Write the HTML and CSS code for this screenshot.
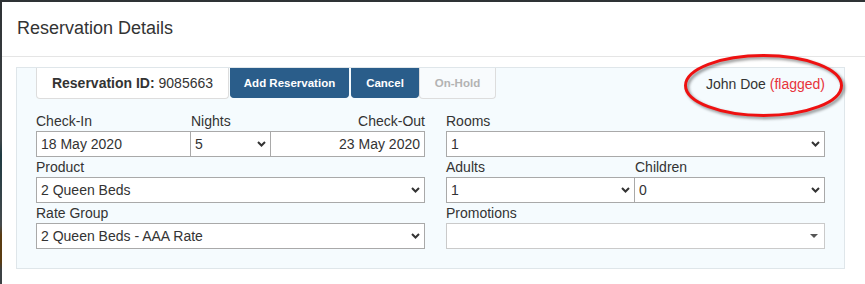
FILE: index.html
```html
<!DOCTYPE html>
<html>
<head>
<meta charset="utf-8">
<title>Reservation Details</title>
<link rel="stylesheet" href="styles.css">
</head>
<body>
<div class="modal">
  <div class="modal-header">
    <h4 class="title">Reservation Details</h4>
  </div>
  <div class="modal-body">
    <div class="panel">
      <div class="topbar">
        <div class="tabs">
          <div class="tab tab-id"><b>Reservation ID:</b>&nbsp;9085663</div>
          <button class="tab btn btn-primary add">Add Reservation</button>
          <button class="tab btn btn-primary cancel">Cancel</button>
          <button class="tab btn hold">On-Hold</button>
        </div>
        <div class="guest">John Doe <span class="flag">(flagged)</span></div>
      </div>
      <div class="form">
        <div class="col">
          <div class="row">
            <div class="field w-in">
              <label>Check-In</label>
              <div class="ctl">18 May 2020</div>
            </div>
            <div class="field w-nights joined">
              <label>Nights</label>
              <div class="ctl"><span>5</span><svg class="chev" width="9" height="6" viewBox="0 0 9 6"><polyline points="1,1 4.5,4.5 8,1"/></svg></div>
            </div>
            <div class="field w-out joined">
              <label class="right">Check-Out</label>
              <div class="ctl end">23 May 2020</div>
            </div>
          </div>
          <div class="field">
            <label>Product</label>
            <div class="ctl"><span>2 Queen Beds</span><svg class="chev" width="9" height="6" viewBox="0 0 9 6"><polyline points="1,1 4.5,4.5 8,1"/></svg></div>
          </div>
          <div class="field">
            <label>Rate Group</label>
            <div class="ctl"><span>2 Queen Beds - AAA Rate</span><svg class="chev" width="9" height="6" viewBox="0 0 9 6"><polyline points="1,1 4.5,4.5 8,1"/></svg></div>
          </div>
        </div>
        <div class="col">
          <div class="field">
            <label>Rooms</label>
            <div class="ctl"><span>1</span><svg class="chev" width="9" height="6" viewBox="0 0 9 6"><polyline points="1,1 4.5,4.5 8,1"/></svg></div>
          </div>
          <div class="row">
            <div class="field w-adults">
              <label>Adults</label>
              <div class="ctl"><span>1</span><svg class="chev" width="9" height="6" viewBox="0 0 9 6"><polyline points="1,1 4.5,4.5 8,1"/></svg></div>
            </div>
            <div class="field w-children joined">
              <label>Children</label>
              <div class="ctl"><span>0</span><svg class="chev" width="9" height="6" viewBox="0 0 9 6"><polyline points="1,1 4.5,4.5 8,1"/></svg></div>
            </div>
          </div>
          <div class="field">
            <label>Promotions</label>
            <div class="ctl light"><span></span><svg class="caret" width="8" height="4" viewBox="0 0 8 4"><polygon points="0,0 8,0 4,4"/></svg></div>
          </div>
        </div>
      </div>
    </div>
  </div>
</div>
<svg class="annot" width="176" height="76" viewBox="0 0 176 76">
  <ellipse cx="83.5" cy="35.5" rx="78" ry="30"/>
</svg>
</body>
</html>
```

FILE: styles.css
```css
html, body {
  margin: 0;
  height: 284px;
  overflow: hidden;
}
body {
  position: relative;
  background: linear-gradient(to bottom, #2e3235 0px, #3f4548 140px, #1f3b42 155px, #2a3f45 175px, #454a4d 225px, #5a3c12 235px, #5a3c12 262px, #3c4144 270px);
  font-family: "Liberation Sans", Arial, sans-serif;
  color: #333;
}
.modal {
  margin: 2px 0 0 2px;
  background: #fff;
  height: 282px;
}
.modal-header {
  height: 55px;
  box-sizing: border-box;
  border-bottom: 1px solid #e5e5e5;
  padding: 16px 15px 0;
}
.title {
  margin: 0;
  font-size: 18px;
  font-weight: normal;
  line-height: 20px;
  color: #333;
}
.modal-body {
  padding: 10px 14px;
}
.panel {
  width: 829px;
  box-sizing: border-box;
  border: 1px solid #dfe6ea;
  background: #f5fbfe;
  padding: 0 19px 19px;
}
.topbar {
  display: flex;
  justify-content: space-between;
  align-items: center;
  height: 31px;
  margin-bottom: 12px;
}
.tabs {
  display: flex;
  align-items: flex-start;
  height: 31px;
}
.tab {
  box-sizing: border-box;
  height: 31px;
  border: 1px solid #ddd;
  border-top: 0;
  border-radius: 0 0 4px 4px;
  display: flex;
  align-items: center;
  justify-content: center;
  font-family: inherit;
  margin: 0;
}
.tab-id {
  width: 193px;
  background: #fff;
  font-size: 14px;
  color: #333;
}
.btn {
  font-size: 11.5px;
  font-weight: bold;
  padding: 0;
}
.btn-primary {
  background: #2a5d8a;
  border-color: #2a5d8a;
  color: #fff;
  height: 30px;
}
.add {
  width: 119px;
  margin-left: 1px;
}
.cancel {
  width: 68px;
  margin-left: 2px;
}
.hold {
  width: 77px;
  margin-left: 0;
  background: #f8fbfd;
  color: #b3b3b3;
}
.guest {
  font-size: 14px;
  line-height: 20px;
  color: #333;
}
.flag {
  color: #e8333a;
}
.form {
  display: grid;
  grid-template-columns: 389px 379px;
  column-gap: 21px;
}
.col {
  display: flex;
  flex-direction: column;
}
.row {
  display: flex;
}
.field {
  display: flex;
  flex-direction: column;
}
.field label {
  font-size: 14px;
  line-height: 20px;
  height: 20px;
  color: #333;
  white-space: nowrap;
}
.field label.right {
  text-align: right;
}
.joined {
  margin-left: -1px;
}
.joined label {
  padding-left: 1px;
}
.w-in { width: 155px; }
.w-nights { width: 81px; }
.w-out { width: 155px; }
.w-adults { width: 189px; }
.w-children { width: 191px; }
.ctl {
  box-sizing: border-box;
  height: 26px;
  border: 1px solid #a9a9a9;
  background: #fff;
  font-size: 14px;
  color: #333;
  display: flex;
  align-items: center;
  justify-content: space-between;
  padding: 0 4px;
  white-space: nowrap;
}
.ctl.end {
  justify-content: flex-end;
}
.ctl.light {
  border-color: #cacaca;
  padding-right: 6px;
}
.chev {
  display: block;
  fill: none;
  stroke: #333;
  stroke-width: 2;
}
.caret {
  display: block;
  fill: #555;
}
.annot {
  position: absolute;
  left: 680px;
  top: 50px;
  overflow: visible;
  filter: drop-shadow(2px 2px 1.5px rgba(0, 0, 0, 0.45));
}
.annot ellipse {
  fill: none;
  stroke: #ee1111;
  stroke-width: 3;
}
```
